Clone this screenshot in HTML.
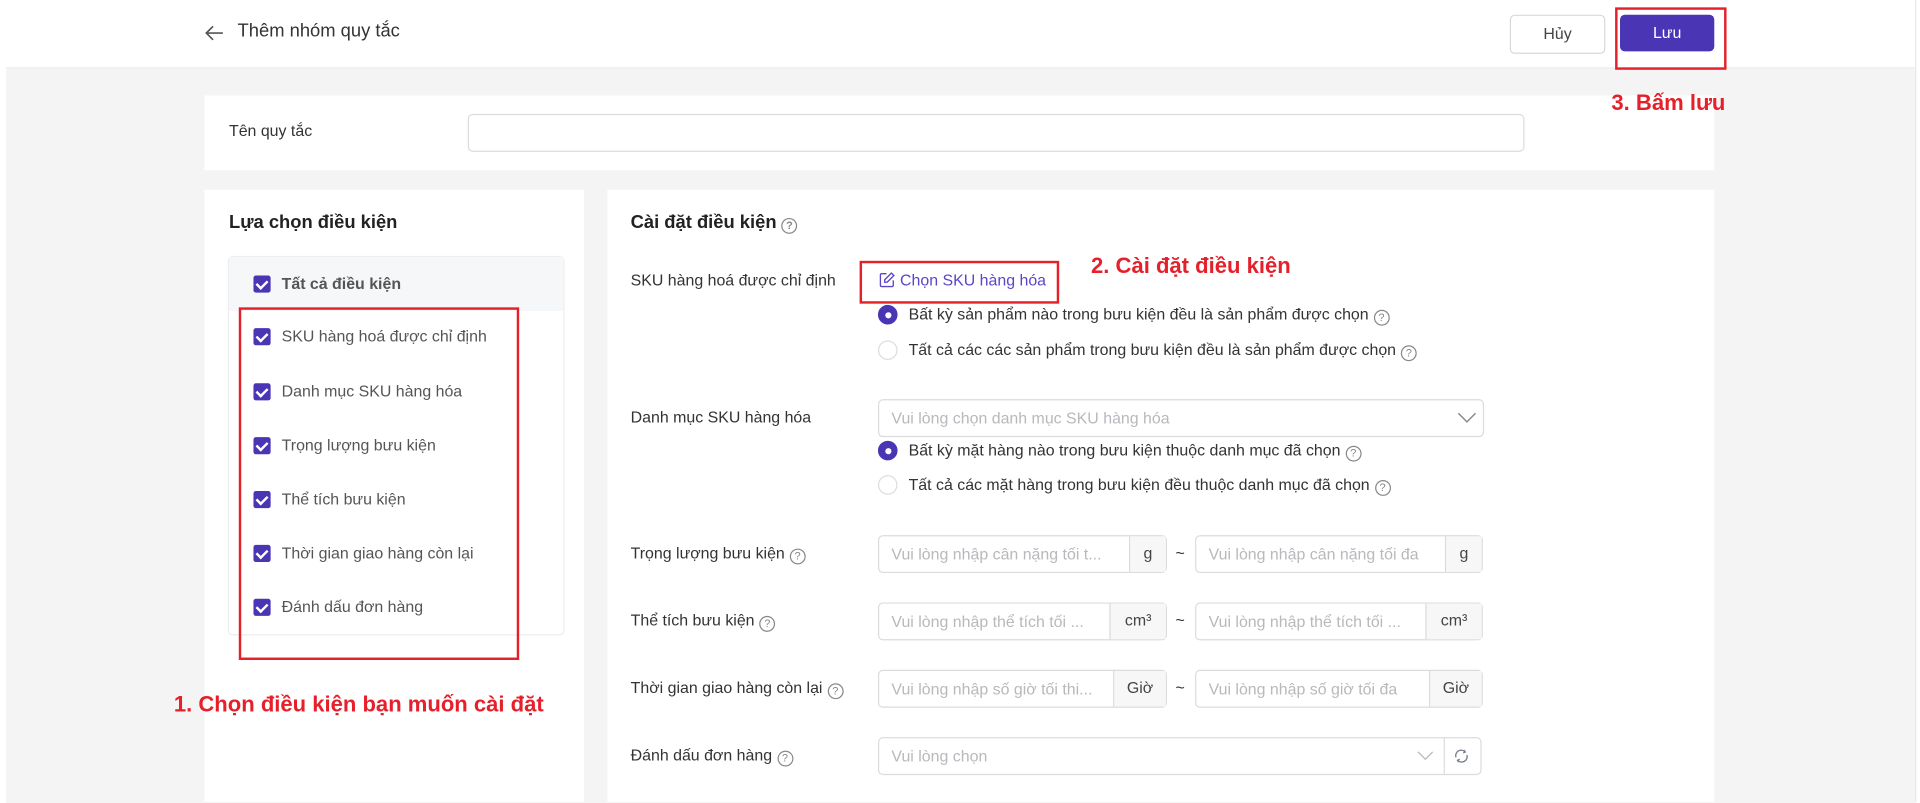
<!DOCTYPE html>
<html><head><meta charset="utf-8"><style>
*{box-sizing:border-box;margin:0;padding:0}
html,body{width:1920px;height:802px;overflow:hidden;background:#fff}
#w{position:absolute;left:0;top:0;width:1568px;height:655px;transform:scale(1.22449);transform-origin:0 0;font-family:"Liberation Sans",sans-serif;color:#333;font-size:13px}
.a{position:absolute}
.bg{left:5px;top:56px;width:1559px;height:600px;background:#f4f4f5}
.card{background:#fff}
.t{position:absolute;white-space:nowrap;line-height:16px}
.inp{position:absolute;border:1px solid #dcdcdf;border-radius:4px;background:#fff}
.ph{color:#b8b8bd;position:absolute;left:10px;top:7px;white-space:nowrap}
.addon{position:absolute;right:0;top:0;bottom:0;background:#f7f7f8;border-left:1px solid #dcdcdf;text-align:center;line-height:28px;color:#444}
.cb{position:absolute;width:14px;height:14px;background:#4a35b5;border-radius:2px}
.cb:after{content:"";position:absolute;left:4px;top:1.5px;width:4px;height:7px;border:solid #fff;border-width:0 2px 2px 0;transform:rotate(45deg)}
.rd{position:absolute;width:16px;height:16px;border-radius:50%;border:1px solid #ddd;background:#fff}
.rd.on{background:#4a35b5;border-color:#4a35b5}
.rd.on:after{content:"";position:absolute;left:4.5px;top:4.5px;width:5px;height:5px;border-radius:50%;background:#fff}
.q{display:inline-block;width:13px;height:13px;border:1px solid #888;border-radius:50%;font-size:9px;line-height:11px;text-align:center;color:#888;vertical-align:-1px;margin-left:4px}
.red{position:absolute;border:2px solid #e5202b;z-index:5}
.rt{position:absolute;color:#e5202b;font-weight:bold;font-size:18px;white-space:nowrap;font-family:"Liberation Sans",sans-serif;z-index:6}
</style></head><body><div id="w">
<div class="a" style="left:5px;top:0;width:1559px;height:56px;border-bottom:1px solid #ececec;background:#fff"></div>
<div class="a bg"></div>
<div class="a" style="left:1564px;top:0;width:1px;height:655px;background:#e8e8e8"></div>
<svg class="a" style="left:167px;top:20px" width="16" height="14" viewBox="0 0 16 14"><path d="M15 7H2M7 1.5L1.5 7 7 12.5" fill="none" stroke="#555" stroke-width="1.4"/></svg>
<div class="t" style="left:194px;top:18px;font-size:15px;color:#333">Thêm nhóm quy tắc</div>
<div class="a" style="left:1233px;top:12px;width:78px;height:32px;border:1px solid #d9d9d9;border-radius:4px;text-align:center;line-height:30px;color:#444">Hủy</div>
<div class="a" style="left:1323px;top:12px;width:77px;height:30px;background:#4a35b5;border-radius:4px;text-align:center;line-height:30px;color:#fff">Lưu</div>
<div class="red" style="left:1319px;top:6px;width:91px;height:51px"></div>

<div class="a card" style="left:167px;top:78px;width:1233px;height:61px"></div>
<div class="rt" style="left:1316px;top:74px">3. Bấm lưu</div>
<div class="t" style="left:187px;top:99px">Tên quy tắc</div>
<div class="inp" style="left:382px;top:93px;width:863px;height:31px"></div>

<div class="a card" style="left:167px;top:155px;width:310px;height:500px"></div>
<div class="t" style="left:187px;top:174px;font-size:15px;font-weight:bold;color:#222">Lựa chọn điều kiện</div>
<div class="a" style="left:186px;top:209px;width:275px;height:310px;border:1px solid #eee;border-radius:4px;background:#fff"></div>
<div class="a" style="left:187px;top:210px;width:273px;height:44px;background:#f6f7f9"></div>
<div class="cb" style="left:207px;top:225px"></div><div class="t" style="left:230px;top:224px;font-weight:bold;color:#555">Tất cả điều kiện</div>
<div class="cb" style="left:207px;top:268px"></div><div class="t" style="left:230px;top:267px;color:#555">SKU hàng hoá được chỉ định</div>
<div class="cb" style="left:207px;top:313px"></div><div class="t" style="left:230px;top:312px;color:#555">Danh mục SKU hàng hóa</div>
<div class="cb" style="left:207px;top:357px"></div><div class="t" style="left:230px;top:356px;color:#555">Trọng lượng bưu kiện</div>
<div class="cb" style="left:207px;top:401px"></div><div class="t" style="left:230px;top:400px;color:#555">Thể tích bưu kiện</div>
<div class="cb" style="left:207px;top:445px"></div><div class="t" style="left:230px;top:444px;color:#555">Thời gian giao hàng còn lại</div>
<div class="cb" style="left:207px;top:489px"></div><div class="t" style="left:230px;top:488px;color:#555">Đánh dấu đơn hàng</div>
<div class="red" style="left:195px;top:251px;width:229px;height:288px"></div>
<div class="rt" style="left:142px;top:565px">1. Chọn điều kiện bạn muốn cài đặt</div>

<div class="a card" style="left:496px;top:155px;width:904px;height:500px"></div>
<div class="t" style="left:515px;top:174px;font-size:15px;font-weight:bold;color:#222">Cài đặt điều kiện<span class="q">?</span></div>
<div class="t" style="left:515px;top:221px">SKU hàng hoá được chỉ định</div>
<svg class="a" style="left:718px;top:222px" width="13" height="13" viewBox="0 0 13 13"><path d="M6 1.5H2a1 1 0 0 0-1 1V11a1 1 0 0 0 1 1h8.5a1 1 0 0 0 1-1V7M10 1l2 2-5.5 5.5H4.5V6.5z" fill="none" stroke="#5b45c8" stroke-width="1.1"/></svg>
<div class="t" style="left:735px;top:221px;color:#5b45c8">Chọn SKU hàng hóa</div>
<div class="red" style="left:702px;top:213px;width:163px;height:35px"></div>
<div class="rt" style="left:891px;top:207px">2. Cài đặt điều kiện</div>
<div class="rd on" style="left:717px;top:249px"></div><div class="t" style="left:742px;top:249px">Bất kỳ sản phẩm nào trong bưu kiện đều là sản phẩm được chọn<span class="q">?</span></div>
<div class="rd" style="left:717px;top:278px"></div><div class="t" style="left:742px;top:278px">Tất cả các các sản phẩm trong bưu kiện đều là sản phẩm được chọn<span class="q">?</span></div>

<div class="t" style="left:515px;top:333px">Danh mục SKU hàng hóa</div>
<div class="inp" style="left:717px;top:326px;width:495px;height:31px"><span class="ph">Vui lòng chọn danh mục SKU hàng hóa</span>
<svg class="a" style="right:5px;top:9px" width="16" height="10" viewBox="0 0 16 10"><path d="M1 1.5l7 7 7-7" fill="none" stroke="#888" stroke-width="1.2"/></svg></div>
<div class="rd on" style="left:717px;top:360px"></div><div class="t" style="left:742px;top:360px">Bất kỳ mặt hàng nào trong bưu kiện thuộc danh mục đã chọn<span class="q">?</span></div>
<div class="rd" style="left:717px;top:388px"></div><div class="t" style="left:742px;top:388px">Tất cả các mặt hàng trong bưu kiện đều thuộc danh mục đã chọn<span class="q">?</span></div>

<div class="t" style="left:515px;top:444px">Trọng lượng bưu kiện<span class="q">?</span></div>
<div class="inp" style="left:717px;top:437px;width:236px;height:31px"><span class="ph">Vui lòng nhập cân nặng tối t...</span><div class="addon" style="width:30px">g</div></div>
<div class="t" style="left:960px;top:444px">~</div>
<div class="inp" style="left:976px;top:437px;width:235px;height:31px"><span class="ph">Vui lòng nhập cân nặng tối đa</span><div class="addon" style="width:30px">g</div></div>

<div class="t" style="left:515px;top:499px">Thể tích bưu kiện<span class="q">?</span></div>
<div class="inp" style="left:717px;top:492px;width:236px;height:31px"><span class="ph">Vui lòng nhập thể tích tối ...</span><div class="addon" style="width:46px">cm³</div></div>
<div class="t" style="left:960px;top:499px">~</div>
<div class="inp" style="left:976px;top:492px;width:235px;height:31px"><span class="ph">Vui lòng nhập thể tích tối ...</span><div class="addon" style="width:46px">cm³</div></div>

<div class="t" style="left:515px;top:554px">Thời gian giao hàng còn lại<span class="q">?</span></div>
<div class="inp" style="left:717px;top:547px;width:236px;height:31px"><span class="ph">Vui lòng nhập số giờ tối thi...</span><div class="addon" style="width:43px">Giờ</div></div>
<div class="t" style="left:960px;top:554px">~</div>
<div class="inp" style="left:976px;top:547px;width:235px;height:31px"><span class="ph">Vui lòng nhập số giờ tối đa</span><div class="addon" style="width:43px">Giờ</div></div>

<div class="t" style="left:515px;top:609px">Đánh dấu đơn hàng<span class="q">?</span></div>
<div class="inp" style="left:717px;top:602px;width:493px;height:31px"><span class="ph">Vui lòng chọn</span>
<svg class="a" style="right:38px;top:10px" width="14" height="9" viewBox="0 0 14 9"><path d="M1 1l6 6 6-6" fill="none" stroke="#bbb" stroke-width="1.1"/></svg>
<div class="a" style="right:0;top:0;bottom:0;width:30px;border-left:1px solid #dcdcdf"></div>
<svg class="a" style="right:9px;top:8px" width="13" height="13" viewBox="0 0 13 13"><path d="M2 7.5A4.5 4.5 0 0 1 9.5 3M11 5.5A4.5 4.5 0 0 1 3.5 10M8.5 1.5l1.2 1.6-1.8.9M4.5 11.5L3.3 9.9l1.8-.9" fill="none" stroke="#7a8090" stroke-width="1.1"/></svg></div>
</div></body></html>
